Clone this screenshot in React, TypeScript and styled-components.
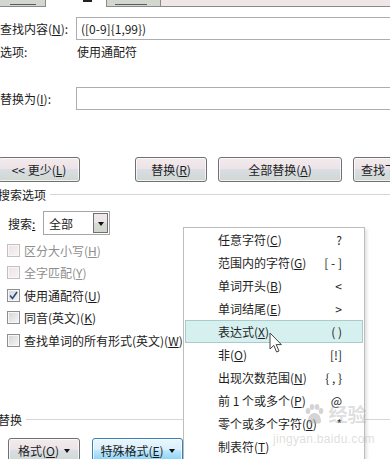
import React from "react";
import styled, { createGlobalStyle } from "styled-components";

const Global = createGlobalStyle`
  html, body { margin: 0; padding: 0; background: #fff; }
  body {
    font-family: "Noto Sans CJK SC", "Noto Sans", sans-serif;
    font-size: 12px;
    color: #1b1b1b;
    overflow: hidden;
  }
  #root { width: 390px; height: 459px; }
  u { text-decoration: underline; text-underline-offset: 1px; }
`;

const Page = styled.div`
  position: relative;
  width: 390px;
  height: 459px;
  overflow: hidden;
  background: #fff;
  display: flex;
  flex-direction: column;
`;

/* ---------- tabs ---------- */
const TabStrip = styled.div`
  display: flex;
  height: 7px;
  flex-shrink: 0;
`;
const Tab = styled.div<{ $w: number; $left?: boolean }>`
  width: ${(p) => p.$w}px;
  box-sizing: border-box;
  background: #d3d7cf;
  border-right: 1px solid #8a8a8a;
  border-left: ${(p) => (p.$left ? "1px solid #8a8a8a" : "none")};
  border-bottom: 1px solid #8a8a8a;
  display: flex;
  align-items: flex-end;
  padding: 0 0 1px ${(p) => (p.$left ? 8 : 10)}px;
`;
const ActiveTab = styled.div`
  width: 60px;
  background: #fff;
  display: flex;
  align-items: flex-start;
  padding-left: 37px;
  box-sizing: border-box;
`;
const TabRest = styled.div`
  flex: 1;
  background: #efe6e6;
  border-bottom: 1px solid #8a8a8a;
`;
const TabMark = styled.span<{ $w: number }>`
  display: block;
  width: ${(p) => p.$w}px;
  height: 1px;
  background: #5a5a6a;
`;
const ActiveMark = styled.span`
  display: block;
  width: 9px;
  height: 2px;
  background: #222;
`;

/* ---------- form ---------- */
const FieldRow = styled.div<{ $mt: number }>`
  display: grid;
  grid-template-columns: 76px 1fr;
  align-items: center;
  height: 23px;
  margin-top: ${(p) => p.$mt}px;
  flex-shrink: 0;
`;
const Label = styled.span`
  white-space: nowrap;
  line-height: 14px;
`;
const TextBox = styled.div`
  height: 23px;
  box-sizing: border-box;
  border: 1px solid #abadb3;
  margin-right: -10px;
  padding-left: 4px;
  display: flex;
  align-items: center;
`;
const InfoRow = styled.div<{ $mt: number }>`
  display: grid;
  grid-template-columns: 77px 1fr;
  align-items: center;
  height: 16px;
  margin-top: ${(p) => p.$mt}px;
  flex-shrink: 0;
`;

/* ---------- buttons ---------- */
const ButtonRow = styled.div<{ $mt: number; $pl?: number }>`
  display: flex;
  height: 25px;
  margin-top: ${(p) => p.$mt}px;
  padding-left: ${(p) => p.$pl ?? 0}px;
  flex-shrink: 0;
`;
const Button = styled.div<{ $w: number; $ml?: number; $align?: string; $hot?: boolean }>`
  width: ${(p) => p.$w}px;
  margin-left: ${(p) => p.$ml ?? 0}px;
  flex-shrink: 0;
  box-sizing: border-box;
  height: 25px;
  border: 1px solid ${(p) => (p.$hot ? "#3c7fb1" : "#707070")};
  border-radius: 3px;
  background: ${(p) =>
    p.$hot
      ? "linear-gradient(#eaf6fd 0%, #d9f0fc 45%, #bee6fd 50%, #82cff2 100%)"
      : "linear-gradient(#f2eaec 0%, #ede3e6 48%, #d9dde6 50%, #d0d8cf 100%)"};
  box-shadow: inset 0 0 0 1px rgba(255, 255, 255, 0.7);
  display: flex;
  align-items: center;
  justify-content: ${(p) => p.$align ?? "center"};
  padding-left: ${(p) => (p.$align === "flex-start" ? 7 : 0)}px;
  white-space: pre;
  gap: 5px;
`;
const Caret = styled.span`
  width: 0;
  height: 0;
  border-left: 3.5px solid transparent;
  border-right: 3.5px solid transparent;
  border-top: 4px solid #111;
  margin-top: 1px;
`;

/* ---------- groups ---------- */
const GroupHeader = styled.div<{ $mt: number }>`
  display: flex;
  align-items: center;
  gap: 4px;
  height: 14px;
  margin-top: ${(p) => p.$mt}px;
  margin-left: -2px;
  flex-shrink: 0;
`;
const GroupLine = styled.div`
  flex: 1;
  height: 1px;
  background: #d5d5dd;
`;

const SearchRow = styled.div`
  display: flex;
  align-items: center;
  height: 24px;
  margin-top: 10px;
  padding-left: 8px;
  flex-shrink: 0;
`;
const SearchLabel = styled.span`
  width: 35px;
`;
const Select = styled.div`
  width: 67px;
  height: 24px;
  box-sizing: border-box;
  border: 1px solid #a5a5a5;
  display: flex;
  align-items: center;
  padding: 1px;
`;
const SelectText = styled.span`
  flex: 1;
  padding-left: 4px;
`;
const DropBtn = styled.div`
  width: 15px;
  height: 20px;
  box-sizing: border-box;
  border: 1px solid #707070;
  background: linear-gradient(#f1e8ea 0%, #ebe3e5 48%, #d6dcd4 52%, #cfd6cd 100%);
  display: flex;
  align-items: center;
  justify-content: center;
`;

const CheckList = styled.div`
  display: flex;
  flex-direction: column;
  margin-top: 4px;
  padding-left: 7px;
  flex-shrink: 0;
`;
const CheckRow = styled.div<{ $disabled?: boolean }>`
  display: flex;
  align-items: center;
  height: 22.5px;
  gap: 4px;
  color: ${(p) => (p.$disabled ? "#8e8e8e" : "#1b1b1b")};
  white-space: nowrap;
`;
const Box = styled.span<{ $disabled?: boolean }>`
  width: 13px;
  height: 13px;
  box-sizing: border-box;
  border: 1px solid ${(p) => (p.$disabled ? "#c4c0c0" : "#8e8f8f")};
  background: ${(p) =>
    p.$disabled
      ? "linear-gradient(135deg, #ece2e4, #f8f4f4)"
      : "linear-gradient(135deg, #d4d4d4, #f6f6f6)"};
  box-shadow: inset 0 0 0 1px #f7f7f7;
  display: flex;
  align-items: center;
  justify-content: center;
`;

/* ---------- menu ---------- */
const Menu = styled.div`
  position: absolute;
  left: 183px;
  top: 227px;
  width: 182px;
  bottom: -20px;
  box-sizing: border-box;
  background: #fff;
  border: 1px solid #bdbdbd;
  padding: 0 1px;
  display: flex;
  flex-direction: column;
  box-shadow: 2px 2px 3px rgba(0, 0, 0, 0.12);
`;
const MenuItem = styled.div<{ $hot?: boolean }>`
  height: 23px;
  box-sizing: border-box;
  border: 1px solid ${(p) => (p.$hot ? "#a8cccc" : "transparent")};
  background: ${(p) => (p.$hot ? "#d6efef" : "transparent")};
  display: flex;
  align-items: center;
  padding: 0 20px 0 32px;
  color: #1e1e1e;
  white-space: nowrap;
`;
const ItemName = styled.span`
  flex: 1;
`;
const Shortcut = styled.span`
  white-space: pre;
  color: #222;
`;

const Cursor = styled.svg`
  position: absolute;
  left: 269px;
  top: 332px;
`;

const Watermark = styled.div`
  position: absolute;
  left: 266px;
  top: 402px;
  width: 116px;
  display: flex;
  flex-direction: column;
  align-items: center;
  color: rgba(170, 170, 170, 0.4);
  pointer-events: none;
`;
const WmTop = styled.div`
  display: flex;
  align-items: center;
  gap: 3px;
  padding-left: 22px;
  font-size: 19px;
  font-weight: 700;
  line-height: 24px;
`;
const WmUrl = styled.div`
  font-family: "Liberation Sans", sans-serif;
  font-size: 12px;
  letter-spacing: 0.3px;
  margin-top: 6px;
`;

const menuItems: { name: React.ReactNode; key: string; hot?: boolean }[] = [
  { name: <>任意字符(<u>C</u>)</>, key: "?" },
  { name: <>范围内的字符(<u>G</u>)</>, key: "[ - ]" },
  { name: <>单词开头(<u>B</u>)</>, key: "<" },
  { name: <>单词结尾(<u>E</u>)</>, key: ">" },
  { name: <>表达式(<u>X</u>)</>, key: "( )", hot: true },
  { name: <>非(<u>O</u>)</>, key: "[!]" },
  { name: <>出现次数范围(<u>N</u>)</>, key: "{ , }" },
  { name: <>前 1 个或多个(<u>P</u>)</>, key: "@" },
  { name: <>零个或多个字符(<u>0</u>)</>, key: "*" },
  { name: <>制表符(<u>T</u>)</>, key: "" },
];

const checks: { label: React.ReactNode; disabled?: boolean; checked?: boolean }[] = [
  { label: <>区分大小写(<u>H</u>)</>, disabled: true },
  { label: <>全字匹配(<u>Y</u>)</>, disabled: true },
  { label: <>使用通配符(<u>U</u>)</>, checked: true },
  { label: <>同音(英文)(<u>K</u>)</> },
  { label: <>查找单词的所有形式(英文)(<u>W</u>)</> },
];

export default function App() {
  return (
    <Page>
      <Global />
      <TabStrip>
        <Tab $w={46}>
          <TabMark $w={26} />
        </Tab>
        <ActiveTab>
          <ActiveMark />
        </ActiveTab>
        <Tab $w={55} $left>
          <TabMark $w={32} />
        </Tab>
        <TabRest />
      </TabStrip>

      <FieldRow $mt={10}>
        <Label>
          查找内容(<u>N</u>):
        </Label>
        <TextBox>([0-9]{"{"}1,99{"}"})</TextBox>
      </FieldRow>
      <InfoRow $mt={4}>
        <Label>选项:</Label>
        <Label>使用通配符</Label>
      </InfoRow>
      <FieldRow $mt={27}>
        <Label>
          替换为(<u>I</u>):
        </Label>
        <TextBox />
      </FieldRow>

      <ButtonRow $mt={47}>
        <Button $w={82} $ml={-2}>
          <span>
            {"<< "}更少(<u>L</u>)
          </span>
        </Button>
        <Button $w={72} $ml={55}>
          <span>
            替换(<u>R</u>)
          </span>
        </Button>
        <Button $w={124} $ml={11}>
          <span>
            全部替换(<u>A</u>)
          </span>
        </Button>
        <Button $w={100} $ml={11} $align="flex-start">
          <span>
            查找下一处(<u>F</u>)
          </span>
        </Button>
      </ButtonRow>

      <GroupHeader $mt={5}>
        <span>搜索选项</span>
        <GroupLine />
      </GroupHeader>

      <SearchRow>
        <SearchLabel>
          搜索<u>:</u>
        </SearchLabel>
        <Select>
          <SelectText>全部</SelectText>
          <DropBtn>
            <Caret />
          </DropBtn>
        </Select>
      </SearchRow>

      <CheckList>
        {checks.map((c, i) => (
          <CheckRow key={i} $disabled={c.disabled}>
            <Box $disabled={c.disabled}>
              {c.checked && (
                <svg width="9" height="9" viewBox="0 0 9 9">
                  <path d="M1 4.5 L3.5 7.5 L8 1" fill="none" stroke="#2b4a86" strokeWidth="1.6" />
                </svg>
              )}
            </Box>
            <span>{c.label}</span>
          </CheckRow>
        ))}
      </CheckList>

      <GroupHeader $mt={61}>
        <span>替换</span>
        <GroupLine />
      </GroupHeader>

      <ButtonRow $mt={11} $pl={8}>
        <Button $w={72}>
          <span>
            格式(<u>O</u>)
          </span>
          <Caret />
        </Button>
        <Button $w={91} $ml={12} $hot>
          <span>
            特殊格式(<u>E</u>)
          </span>
          <Caret />
        </Button>
      </ButtonRow>

      <Menu>
        {menuItems.map((m, i) => (
          <MenuItem key={i} $hot={m.hot}>
            <ItemName>{m.name}</ItemName>
            <Shortcut>{m.key}</Shortcut>
          </MenuItem>
        ))}
      </Menu>

      <Watermark>
        <WmTop>
          <svg width="22" height="22" viewBox="0 0 22 22">
            <g fill="rgba(170,170,170,0.5)">
              <ellipse cx="5" cy="8" rx="2.3" ry="3" />
              <ellipse cx="9" cy="4" rx="2.3" ry="3" />
              <ellipse cx="14" cy="4" rx="2.3" ry="3" />
              <ellipse cx="18" cy="8" rx="2.3" ry="3" />
              <path d="M5 18 C5 12 9 10 11.5 10 C14 10 18 12 18 18 C18 21 15 21 11.5 20 C8 21 5 21 5 18 Z" />
            </g>
          </svg>
          <span>经验</span>
        </WmTop>
        <WmUrl>jingyan.baidu.com</WmUrl>
      </Watermark>

      <Cursor width="14" height="22" viewBox="0 0 14 22">
        <path
          d="M1 1 L1 17 L4.8 13.4 L7.6 20 L10 19 L7.2 12.6 L12.4 12.6 Z"
          fill="#fff"
          stroke="#444"
          strokeWidth="1"
          strokeLinejoin="round"
        />
      </Cursor>
    </Page>
  );
}
